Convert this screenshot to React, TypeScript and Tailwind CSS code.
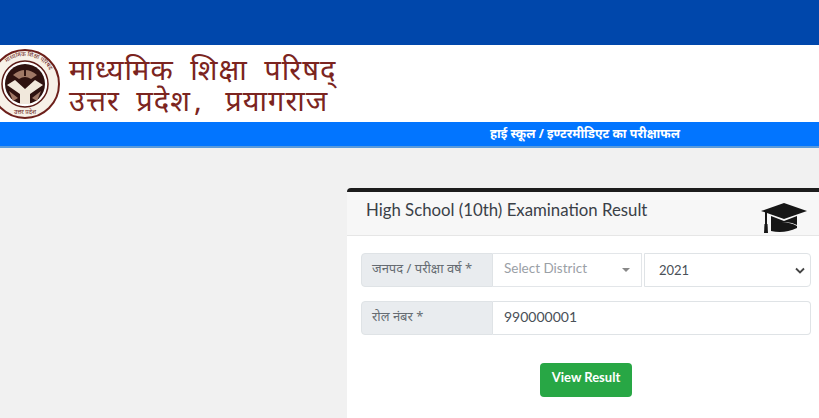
const sans = "font-['Lato','Noto_Sans','Liberation_Sans',sans-serif]";

function Logo() {
  return (
    <svg width="69" height="72" viewBox="0 0 69 72" className="shrink-0">
      <circle cx="25" cy="36" r="34" fill="#f7f1e8" stroke="#6d201b" strokeWidth="2" />
      <circle cx="25" cy="36" r="23" fill="#fff" stroke="#5a1a16" strokeWidth="1.5" />
      <circle cx="25" cy="36" r="20" fill="#2e1210" />
      <path d="M7 37 L15 32 L25 41 L35 32 L43 37 L30 46 V56 H20 V46 Z" fill="#f1e8dc" />
      <path d="M13 27 Q25 17 37 27 L31 31 Q25 27 19 31 Z" fill="#a07866" />
      <path d="M24 20 H26 V28 H24 Z" fill="#2e1210" />
      <path d="M9 43 L18 50 L13 53 Z M41 43 L32 50 L37 53 Z" fill="#a07866" />
      <defs>
        <path id="logoArc" d="M-3 36 A28 28 0 0 1 53 36" />
      </defs>
      <text fontSize="6" fill="#6b1d18" fontFamily="'Noto Sans',sans-serif">
        <textPath href="#logoArc" startOffset="24">माध्यमिक शिक्षा परिषद</textPath>
      </text>
      <text x="25" y="66" fontSize="6" textAnchor="middle" fill="#6b1d18" fontFamily="'Noto Sans',sans-serif">
        उत्तर प्रदेश
      </text>
    </svg>
  );
}

function GradCap() {
  return (
    <svg width="46" height="32" viewBox="0 0 46 32" className="shrink-0">
      <path d="M23 0 L46 8 L23 16 L0 8 Z" fill="#161616" />
      <path d="M10 13 L23 18 L36 13 V22 Q23 15 10 26 Z" fill="#161616" />
      <path d="M10 22 Q23 16 36 23 V25 Q23 31 10 28 Z" fill="#161616" />
      <path d="M4 9 H6 V22 H4 Z" fill="#161616" />
      <path d="M3.5 21 H6.5 L7 30 H3 Z" fill="#161616" />
    </svg>
  );
}

function InputLabel({ children }: { children: React.ReactNode }) {
  return (
    <div className="w-[132px] shrink-0 h-full flex items-center pl-[10px] pb-[3px] bg-[#e9ecef] border border-[#dfe3e6] rounded-l font-['Noto_Sans',sans-serif] text-[13px] text-[#666c73]">
      {children}
    </div>
  );
}

export default function App() {
  return (
    <main className={`h-[418px] w-[819px] overflow-hidden bg-[#f1f1f1] ${sans}`}>
      {/* Top bar */}
      <div className="h-[45px] bg-[#0047ab]" />

      {/* Board name */}
      <div className="h-[77px] bg-white flex items-center">
        <Logo />
        <div className="font-['Noto_Sans',serif] font-normal text-[#7b2420] text-[29px] leading-[31px] tracking-[1px] [word-spacing:8px]">
          <div>माध्यमिक शिक्षा परिषद्</div>
          <div>
            उत्तर प्रदेश<span className="ml-[3px]">,</span> <span className="ml-[6px]">प्रयागराज</span>
          </div>
        </div>
      </div>

      {/* Blue strip */}
      <div className="h-[26px] bg-[#0275ff] border-b-2 border-[#5a9bdc] pl-[490px] flex items-center">
        <span className="text-white font-['Noto_Sans',sans-serif] font-bold text-[12.5px] leading-none">हाई स्कूल / इण्टरमीडिएट का परीक्षाफल</span>
      </div>

      {/* Result card */}
      <div className="flex justify-end pt-[40px]">
        <section className="w-[472px] h-[240px] bg-white border-t-4 border-[#1c1c1c] rounded-tl">
          <header className="h-[44px] bg-[#f7f7f7] border-b border-[#e6e6e6] flex items-center justify-between pl-[19px] pr-[12px]">
            <h1 className="text-[16.8px] text-[#3a4047] -mt-[8px]">High School (10th) Examination Result</h1>
            <div className="mt-[10px]">
              <GradCap />
            </div>
          </header>

          <div className="pl-[14px] pr-[8px] pt-[17px]">
            <div className="flex h-[34px] w-[450px]">
              <InputLabel>जनपद / परीक्षा वर्ष *</InputLabel>
              <div className="w-[149px] flex items-center justify-between pl-[11px] pr-[11px] bg-white border-y border-r border-[#e3e6e9] text-[13.5px] text-[#9aa0a6]">
                <span className="-mt-[4px]">Select District</span>
                <span className="w-0 h-0 border-x-[4px] border-x-transparent border-t-[4px] border-t-[#888]" />
              </div>
              <div className="flex-1 ml-[2px] flex items-center justify-between pl-[14px] pr-[5px] bg-white border border-[#dfe3e6] rounded-r text-[13px] text-[#495057]">
                <span className="mt-[1px]">2021</span>
                <svg width="10" height="7" viewBox="0 0 10 7" className="mt-[1px]">
                  <path d="M1 1.5 L5 5.5 L9 1.5" fill="none" stroke="#444" strokeWidth="1.8" />
                </svg>
              </div>
            </div>

            <div className="flex h-[34px] w-[450px] mt-[14px]">
              <InputLabel>रोल नंबर *</InputLabel>
              <div className="flex-1 flex items-center pl-[11px] pb-[4px] bg-white border-y border-r border-[#dfe3e6] rounded-r text-[14px] text-[#495057]">
                990000001
              </div>
            </div>

            <div className="flex justify-center pt-[28px]">
              <button className="w-[92px] h-[34px] pb-[4px] bg-[#28a745] rounded text-white text-[13px] font-bold">
                View Result
              </button>
            </div>
          </div>
        </section>
      </div>
    </main>
  );
}
